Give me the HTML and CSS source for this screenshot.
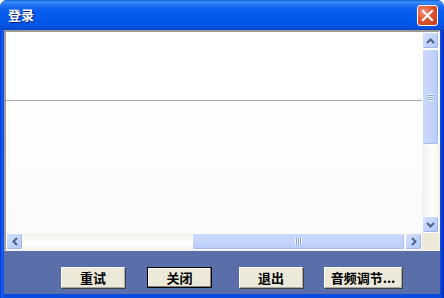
FILE: index.html
```html
<!DOCTYPE html>
<html>
<head>
<meta charset="utf-8">
<link rel="stylesheet" href="styles.css">
</head>
<body>
<div class="window">
  <div class="titlebar">
    <span class="title">登录</span>
    <span class="close">
      <svg width="13" height="13" viewBox="0 0 13 13"><path d="M2 2 L11 11 M11 2 L2 11" stroke="#fff" stroke-width="2.2" stroke-linecap="square"/></svg>
    </span>
  </div>
  <div class="frame">
    <div class="client">
      <div class="editbox">
        <div class="text">
          <div class="pane top"></div>
          <div class="pane bottom"></div>
        </div>
        <div class="vscroll">
          <div class="sbtn"><svg width="9" height="6" viewBox="0 0 9 6"><path d="M1 5 L4.5 1.5 L8 5" fill="none" stroke="#4d6185" stroke-width="2"/></svg></div>
          <div class="vthumb"><span class="grip v"></span></div>
          <div class="vtrack"></div>
          <div class="sbtn"><svg width="9" height="6" viewBox="0 0 9 6"><path d="M1 1 L4.5 4.5 L8 1" fill="none" stroke="#4d6185" stroke-width="2"/></svg></div>
        </div>
        <div class="hscroll">
          <div class="sbtn"><svg width="6" height="9" viewBox="0 0 6 9"><path d="M5 1 L1.5 4.5 L5 8" fill="none" stroke="#4d6185" stroke-width="2"/></svg></div>
          <div class="htrack"></div>
          <div class="hthumb"><span class="grip h"></span></div>
          <div class="sbtn"><svg width="6" height="9" viewBox="0 0 6 9"><path d="M1 1 L4.5 4.5 L1 8" fill="none" stroke="#4d6185" stroke-width="2"/></svg></div>
        </div>
        <div class="corner"></div>
      </div>
      <div class="buttons">
        <button class="btn b1">重试</button>
        <button class="btn b2 default">关闭</button>
        <button class="btn b3">退出</button>
        <button class="btn b4">音频调节...</button>
      </div>
    </div>
  </div>
</div>
</body>
</html>
```
FILE: styles.css
```css
html, body {
  margin: 0;
  padding: 0;
  background: #ffffff;
}
body {
  width: 444px;
  height: 298px;
  overflow: hidden;
  font-family: "Noto Sans CJK SC", "DejaVu Sans", sans-serif;
}
.window {
  width: 444px;
  height: 298px;
  display: flex;
  flex-direction: column;
  border-radius: 7px 7px 0 0;
  overflow: hidden;
  background: #0a46d8;
}
.titlebar {
  height: 30px;
  flex: none;
  display: flex;
  align-items: center;
  justify-content: space-between;
  padding: 0 6px 0 8px;
  background: linear-gradient(to bottom, #0a5bd8 0px, #3d93fb 2px, #2472f4 5px, #0a5ef0 10px, #0058eb 20px, #0053e2 26px, #0046cc 30px);
}
.title {
  color: #fff;
  font-weight: bold;
  font-size: 13px;
  text-shadow: 1px 1px 0 #0a1f6f;
  margin-top: -1px;
}
.close {
  width: 19px;
  height: 19px;
  border: 1px solid #fff;
  border-radius: 3px;
  background: radial-gradient(circle at 30% 30%, #f0907a 0%, #e2532e 45%, #c33a16 100%);
  display: flex;
  align-items: center;
  justify-content: center;
}
.frame {
  flex: 1;
  display: flex;
  padding: 0 4px 4px 4px;
  background: linear-gradient(to right, #0831d9 0, #1661f0 2px, #0b4ce0 4px, #0b4ce0 calc(100% - 4px), #0a3fd0 calc(100% - 2px), #0426b8 100%);
  min-height: 0;
}
.client {
  flex: 1;
  display: flex;
  flex-direction: column;
  background: #5a6ea9;
}
.editbox {
  height: 218px;
  flex: none;
  display: grid;
  grid-template-columns: 1fr 17px;
  grid-template-rows: 1fr 17px;
  border-top: 2px solid #9c9a94;
  border-left: 2px solid #a0a0a0;
  border-right: 1px solid #f4f2ea;
  border-bottom: 1px solid #f4f2ea;
  background: #fbf9f5;
}
.text {
  display: flex;
  flex-direction: column;
  background: #fff;
}
.pane.top {
  height: 68px;
  border-bottom: 1px solid #a8a8a8;
  background: #fff;
}
.pane.bottom {
  flex: 1;
  background: linear-gradient(to bottom, #fefefe, #fbfbfb);
}
.vscroll {
  display: flex;
  flex-direction: column;
  background: linear-gradient(to right, #f3f1ec, #fefefe 60%, #f6f5f0);
}
.hscroll {
  display: flex;
  flex-direction: row;
  background: linear-gradient(to bottom, #f3f1ec, #fefefe 60%, #f4f2ec);
}
.corner {
  background: #ece9d8;
}
.sbtn {
  width: 17px;
  height: 17px;
  box-sizing: border-box;
  flex: none;
  border: 1px solid #ffffff;
  border-radius: 2px;
  background: linear-gradient(135deg, #d4e2fd 0%, #c2d5fc 50%, #b1c7f7 100%);
  box-shadow: inset -1px -1px 0 #a0b5e8;
  display: flex;
  align-items: center;
  justify-content: center;
}
.vthumb {
  height: 96px;
  flex: none;
  box-sizing: border-box;
  border: 1px solid #fff;
  border-radius: 2px;
  background: linear-gradient(to right, #c9d8fc, #c4d4fc 50%, #b8cbf8);
  box-shadow: inset -1px -1px 0 #a8bde9;
  display: flex;
  align-items: center;
  justify-content: center;
}
.vtrack { flex: 1; }
.htrack { width: 169px; flex: none; }
.hthumb {
  flex: 1;
  box-sizing: border-box;
  border: 1px solid #fff;
  border-radius: 2px;
  background: linear-gradient(to bottom, #c9d8fc, #c4d4fc 50%, #b8cbf8);
  box-shadow: inset -1px -1px 0 #a8bde9;
  display: flex;
  align-items: center;
  justify-content: center;
}
.grip.v {
  width: 7px;
  height: 7px;
  background: repeating-linear-gradient(to bottom, #eef4fe 0, #eef4fe 1px, #8ca5dc 1px, #8ca5dc 2px);
}
.grip.h {
  width: 7px;
  height: 7px;
  background: repeating-linear-gradient(to right, #eef4fe 0, #eef4fe 1px, #8ca5dc 1px, #8ca5dc 2px);
}
.buttons {
  flex: 1;
  display: flex;
  align-items: flex-start;
  padding: 16px 0 0 57px;
}
.btn {
  height: 21px;
  box-sizing: border-box;
  margin: 0;
  padding: 0;
  border: 1px solid #a9a9a9;
  border-top-color: #fff;
  border-left-color: #fff;
  background: #ece9d8;
  box-shadow: 1px 1px 0 #404040;
  font-family: "Noto Sans CJK SC", "DejaVu Sans", sans-serif;
  font-size: 13px;
  font-weight: bold;
  color: #000;
  line-height: 18px;
  text-align: center;
  white-space: nowrap;
}
.b1 { width: 64px; }
.b2 { width: 65px; margin-left: 22px; }
.b3 { width: 64px; margin-left: 27px; }
.b4 { width: 78px; margin-left: 21px; }
.btn.default {
  border: 1px solid #000;
  box-shadow: inset -1px -1px 0 #808080, inset 1px 1px 0 #fff;
}
```
